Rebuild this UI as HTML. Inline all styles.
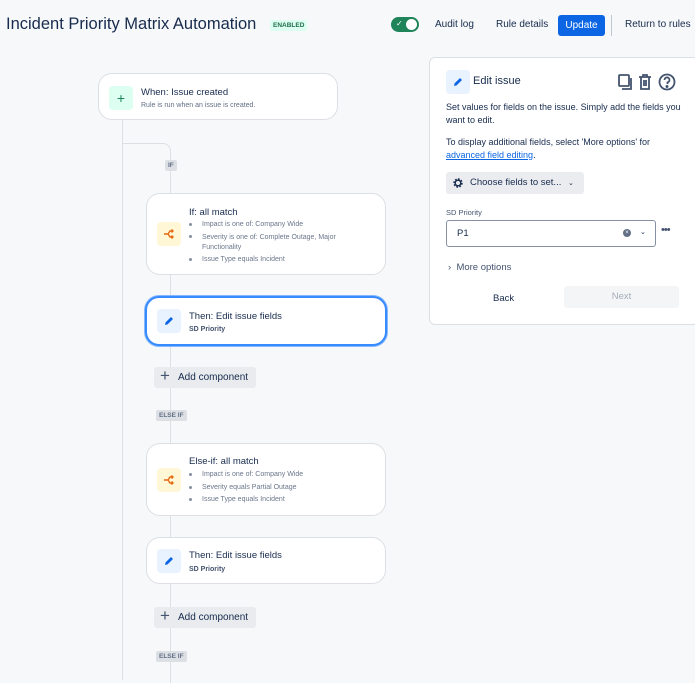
<!DOCTYPE html>
<html><head><meta charset="utf-8"><style>
*{box-sizing:border-box;margin:0;padding:0}
body{width:695px;height:678px;overflow:hidden;background:#f7f8f9;font-family:"Liberation Sans",sans-serif;color:#172b4d;position:relative}
.abs{position:absolute}
.card{position:absolute;background:#fff;border:1px solid #dcdfe4;border-radius:14px}
.ico{position:absolute;width:24px;height:24px;border-radius:4px;display:flex;align-items:center;justify-content:center}
.t{position:absolute;font-size:9.5px;color:#172b4d}
.s{position:absolute;font-size:7px;color:#626f86}
.li{position:absolute;font-size:7px;color:#6b778c}
.li:before{content:"";position:absolute;left:-13px;top:2px;width:3px;height:3px;background:#8590a2;border-radius:50%}
.lbl{position:absolute;background:#dcdfe4;color:#626f86;font-size:6.5px;font-weight:bold;padding:2px 3px;border-radius:2px}
.add{position:absolute;background:#e9ebee;border-radius:3px;font-size:10px;color:#172b4d;height:21px;padding:0 8px 0 24px;line-height:21px}
.add:before{content:"+";position:absolute;left:6px;top:-2px;font-size:17px;color:#44546f}
</style></head><body>
<svg width="0" height="0" style="position:absolute"><defs>
<symbol id="pen" viewBox="0 0 12 12"><path d="M2 10l.6-2.6L8 2l2 2-5.4 5.4z" fill="#0c66e4"/></symbol>
<symbol id="br" viewBox="0 0 12 12"><path d="M1 6h4l2-3h3M5 6l2 3h3M8.5 1.5L10 3 8.5 4.5M8.5 7.5L10 9 8.5 10.5" fill="none" stroke="#e56910" stroke-width="1.4"/></symbol>
</defs></svg>
<div class="abs" style="left:6px;top:15px;font-size:16.5px;color:#172b4d">Incident Priority Matrix Automation</div>
<div class="abs" style="left:270px;top:20px;background:#dcfff1;color:#216e4e;font-size:6.5px;font-weight:bold;padding:2px 3px;border-radius:2px">ENABLED</div>
<div class="abs" style="left:391px;top:17px;width:28px;height:15px;background:#1f845a;border-radius:8px"><div class="abs" style="right:2px;top:2px;width:11px;height:11px;background:#fff;border-radius:50%"></div><div class="abs" style="left:5px;top:2px;color:#fff;font-size:8px">✓</div></div>
<div class="abs" style="left:435px;top:19px;font-size:10px">Audit log</div>
<div class="abs" style="left:496px;top:19px;font-size:10px">Rule details</div>
<div class="abs" style="left:558px;top:15px;width:47px;height:21px;background:#0c66e4;border-radius:3px;color:#fff;font-size:10px;line-height:21px;text-align:center">Update</div>
<div class="abs" style="left:611px;top:15px;width:1px;height:21px;background:#c1c7d0"></div>
<div class="abs" style="left:625px;top:19px;font-size:10px">Return to rules</div>

<div class="abs" style="left:122px;top:120px;width:1px;height:560px;background:#dcdfe4"></div>
<div class="abs" style="left:122px;top:143px;width:49px;height:50px;border-top:1px solid #dcdfe4;border-right:1px solid #dcdfe4;border-top-right-radius:8px"></div>
<div class="abs" style="left:170px;top:193px;width:1px;height:490px;background:#dcdfe4"></div>
<div class="lbl" style="left:165px;top:160px">IF</div>

<div class="card" style="left:98px;top:73px;width:240px;height:47px">
<div class="ico" style="left:10px;top:12px;background:#dcfff1;color:#1f845a;font-size:14px">+</div>
<div class="t" style="left:42px;top:13px">When: Issue created</div>
<div class="s" style="left:42px;top:28px">Rule is run when an issue is created.</div></div>

<div class="card" style="left:146px;top:193px;width:240px;height:82px">
<div class="ico" style="left:10px;top:28px;background:#fff7d6"><svg width="12" height="12"><use href="#br"/></svg></div>
<div class="t" style="left:42px;top:13px">If: all match</div>
<div class="li" style="left:55px;top:27px">Impact is one of: Company Wide</div>
<div class="li" style="left:55px;width:170px;line-height:10px;top:39px">Severity is one of: Complete Outage, Major Functionality</div>
<div class="li" style="left:55px;top:62px">Issue Type equals Incident</div></div>

<div class="card" style="left:145px;top:296px;width:242px;height:50px;border:2px solid #388bff;box-shadow:0 0 0 1px #85b8ff">
<div class="ico" style="left:10px;top:11px;background:#e9f2ff"><svg width="12" height="12"><use href="#pen"/></svg></div>
<div class="t" style="left:42px;top:13px">Then: Edit issue fields</div>
<div class="s" style="left:42px;top:28px;font-weight:bold;color:#44546f">SD Priority</div></div>

<div class="add" style="left:154px;top:367px">Add component</div>
<div class="lbl" style="left:156px;top:410px">ELSE IF</div>

<div class="card" style="left:146px;top:443px;width:240px;height:73px">
<div class="ico" style="left:10px;top:24px;background:#fff7d6"><svg width="12" height="12"><use href="#br"/></svg></div>
<div class="t" style="left:42px;top:12px">Else-if: all match</div>
<div class="li" style="left:55px;top:27px">Impact is one of: Company Wide</div>
<div class="li" style="left:55px;top:40px">Severity equals Partial Outage</div>
<div class="li" style="left:55px;top:52px">Issue Type equals Incident</div></div>

<div class="card" style="left:146px;top:537px;width:240px;height:47px">
<div class="ico" style="left:10px;top:11px;background:#e9f2ff"><svg width="12" height="12"><use href="#pen"/></svg></div>
<div class="t" style="left:42px;top:12px">Then: Edit issue fields</div>
<div class="s" style="left:42px;top:28px;font-weight:bold;color:#44546f">SD Priority</div></div>

<div class="add" style="left:154px;top:607px">Add component</div>
<div class="lbl" style="left:156px;top:651px">ELSE IF</div>

<div class="abs" style="left:429px;top:57px;width:270px;height:268px;background:#fff;border:1px solid #dcdfe4;border-radius:6px">
<div class="ico" style="left:16px;top:12px;background:#e9f2ff"><svg width="12" height="12"><use href="#pen"/></svg></div>
<div class="abs" style="left:43px;top:17px;font-size:11px">Edit issue</div>
<svg class="abs" style="left:186px;top:14px" width="62" height="20" viewBox="0 0 62 20" fill="none" stroke="#44546f" stroke-width="1.8"><rect x="3" y="3" width="10" height="11" rx="1"/><path d="M6 17h9V6"/><path d="M23 5h12M27 5V3h4v2M25 5v12h8V5M28 8v6M30 8v6"/><circle cx="51" cy="10" r="7.5"/><path d="M48.5 8a2.5 2.5 0 1 1 3 2.4v1.6"/><circle cx="51" cy="14.5" r=".6" fill="#44546f"/></svg>
<div class="abs" style="left:16px;top:43px;font-size:9px;line-height:13px;width:245px">Set values for fields on the issue. Simply add the fields you want to edit.</div>
<div class="abs" style="left:16px;top:78px;font-size:9px;line-height:13px;width:245px">To display additional fields, select 'More options' for <span style="color:#0c66e4;text-decoration:underline">advanced field editing</span>.</div>
<div class="abs" style="left:16px;top:114px;width:138px;height:22px;background:#ebecf0;border-radius:3px;font-size:9.5px;line-height:22px;padding-left:24px">Choose fields to set... <span style="font-size:7px;margin-left:4px">⌄</span><svg class="abs" style="left:6px;top:5px" width="12" height="12" viewBox="0 0 12 12"><circle cx="6" cy="6" r="3.6" fill="none" stroke="#172b4d" stroke-width="2.2" stroke-dasharray="1.6 1.2"/><circle cx="6" cy="6" r="2.8" fill="none" stroke="#172b4d" stroke-width="1.4"/></svg></div>
<div class="abs" style="left:16px;top:150px;font-size:7.5px;color:#44546f">SD Priority</div>
<div class="abs" style="left:16px;top:162px;width:210px;height:27px;border:1px solid #8590a2;border-radius:3px;font-size:9.5px;line-height:25px;padding-left:10px">P1<span class="abs" style="left:176px;top:8px;width:8px;height:8px;border-radius:50%;background:#626f86;color:#fff;font-size:6px;line-height:8px;text-align:center">×</span><span class="abs" style="left:193px;top:-1px;font-size:7px">⌄</span></div>
<div class="abs" style="left:231px;top:166px;font-size:11px;color:#44546f;letter-spacing:-1px">•••</div>
<div class="abs" style="left:18px;top:204px;font-size:9.5px;color:#44546f">›&nbsp; More options</div>
<div class="abs" style="left:63px;top:235px;font-size:9.5px">Back</div>
<div class="abs" style="left:134px;top:228px;width:115px;height:22px;background:#f4f5f7;border-radius:3px;font-size:9.5px;color:#a5adba;line-height:22px;text-align:center">Next</div>
</div>
</body></html>
